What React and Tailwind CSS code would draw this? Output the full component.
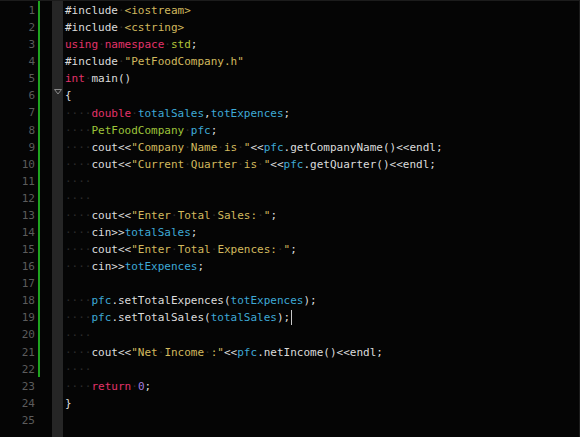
import React from "react";

const C = {
  t: "text-[#dcdcdc]",
  k: "text-[#e3336a]",
  s: "text-[#d2b95e]",
  g: "text-[#9ec43a]",
  y: "text-[#b3c63a]",
  v: "text-[#3ea9d6]",
  n: "text-[#a27ddf]",
};

const I = ["    ", "t"];

const lines = [
  [["#include", "t"], [" ", "t"], ["<iostream>", "s"]],
  [["#include", "t"], [" ", "t"], ["<cstring>", "s"]],
  [["using", "k"], [" ", "t"], ["namespace", "k"], [" ", "t"], ["std", "y"], [";", "t"]],
  [["#include", "t"], [" ", "t"], ['"PetFoodCompany.h"', "s"]],
  [["int", "k"], [" main()", "t"]],
  [["{", "t"]],
  [I, ["double", "k"], [" ", "t"], ["totalSales", "v"], [",", "t"], ["totExpences", "v"], [";", "t"]],
  [I, ["PetFoodCompany", "g"], [" ", "t"], ["pfc", "v"], [";", "t"]],
  [I, ["cout<<", "t"], ['"Company Name is "', "s"], ["<<", "t"], ["pfc", "v"], [".getCompanyName()<<endl;", "t"]],
  [I, ["cout<<", "t"], ['"Current Quarter is "', "s"], ["<<", "t"], ["pfc", "v"], [".getQuarter()<<endl;", "t"]],
  [I],
  [I],
  [I, ["cout<<", "t"], ['"Enter Total Sales: "', "s"], [";", "t"]],
  [I, ["cin>>", "t"], ["totalSales", "v"], [";", "t"]],
  [I, ["cout<<", "t"], ['"Enter Total Expences: "', "s"], [";", "t"]],
  [I, ["cin>>", "t"], ["totExpences", "v"], [";", "t"]],
  [],
  [I, ["pfc", "v"], [".setTotalExpences(", "t"], ["totExpences", "v"], [");", "t"]],
  [I, ["pfc", "v"], [".setTotalSales(", "t"], ["totalSales", "v"], [");", "t"]],
  [I],
  [I, ["cout<<", "t"], ['"Net Income :"', "s"], ["<<", "t"], ["pfc", "v"], [".netIncome()<<endl;", "t"]],
  [I],
  [I, ["return", "k"], [" ", "t"], ["0", "n"], [";", "t"]],
  [["}", "t"]],
  [],
];

// spaces show as faint dots, like the editor's visible whitespace
const Token = ({ text, color }) => {
  const parts = text.split(/( +)/);
  return parts.map((p, i) =>
    p.startsWith(" ") ? (
      <span key={i} className="text-[#2c2c2c]">
        {"·".repeat(p.length)}
      </span>
    ) : (
      <span key={i} className={C[color]}>
        {p}
      </span>
    )
  );
};

const App = () => {
  return (
    <div
      className="w-[580px] h-[437px] bg-[#050505] border-t border-[#1c1c1c] border-r overflow-hidden flex text-[11px] leading-[17px]"
      style={{ fontFamily: '"DejaVu Sans Mono", monospace' }}
    >
      <div className="w-[36px] pt-[1px] text-right pr-[1px] text-[#5c5c5c] shrink-0">
        {lines.map((_, i) => (
          <div key={i} className="h-[17.08px]">{i + 1}</div>
        ))}
      </div>

      <div className="w-[16px] shrink-0 pl-[2px]">
        <div className="w-[2px] h-[376px] bg-[#1fa31f]" />
      </div>

      <div className="w-[11px] shrink-0 bg-[#262626] pt-[1px]">
        {lines.map((_, i) => (
          <div key={i} className="h-[17.08px] flex items-center justify-center">
            {i === 5 && (
              <svg width="8" height="6" viewBox="0 0 8 6" className="mt-[-8px]">
                <path d="M0.5 0.5 L7.5 0.5 L4 5 Z" fill="none" stroke="#8a8a8a" strokeWidth="1" />
              </svg>
            )}
          </div>
        ))}
      </div>

      <div className="pl-[2px] pt-[1px] whitespace-pre flex-1">
        {lines.map((line, i) => (
          <div key={i} className="h-[17.08px] flex items-center">
            {line.map(([text, color], j) => (
              <Token key={j} text={text} color={color} />
            ))}
            {i === 18 && <span className="w-[1px] h-[15px] bg-[#c8c8c8] ml-[1px]" />}
          </div>
        ))}
      </div>
    </div>
  );
};

export default App;
